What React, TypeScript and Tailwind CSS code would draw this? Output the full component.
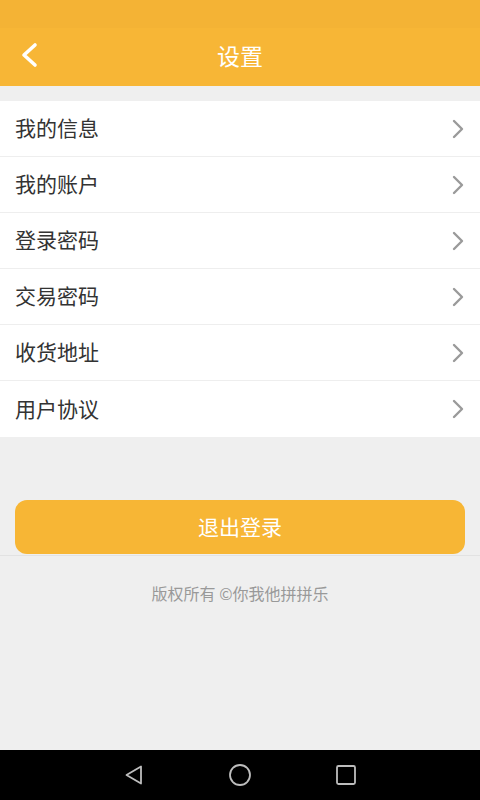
import React from "react";

const items = ["我的信息", "我的账户", "登录密码", "交易密码", "收货地址", "用户协议"];

const font = { fontFamily: '"Noto Sans CJK SC", "Noto Sans", sans-serif' };

export default function App() {
  return (
    <div className="w-[480px] h-[800px] bg-[#efefef] flex flex-col overflow-hidden" style={font}>
      <div className="h-[28px] bg-[#f4b335] shrink-0" />
      <div className="h-[58px] bg-[#f7b636] shrink-0 relative flex items-center justify-center">
        <div className="absolute left-[19px] top-[14px]">
          <svg width="20" height="26" viewBox="0 0 20 26">
            <path d="M16 3 L5 13 L16 23" fill="none" stroke="#ffffff" strokeWidth="3.6" strokeLinecap="round" strokeLinejoin="round" />
          </svg>
        </div>
        <span className="text-white text-[23px] leading-none -mt-[4px]">设置</span>
      </div>
      <div className="h-[15px] shrink-0" />
      <div className="bg-white flex flex-col">
        {items.map((t, i) => (
          <div
            key={t}
            className={`h-[56px] flex items-center justify-between pl-[15px] pr-[15px] ${i < items.length - 1 ? "border-b border-[#eeeeee]" : ""}`}
          >
            <span className="text-[21px] text-[#333333] leading-none -mt-[2px]">{t}</span>
            <svg width="14" height="20" viewBox="0 0 14 20">
              <path d="M3 2 L11 10 L3 18" fill="none" stroke="#9a9a9a" strokeWidth="2.4" strokeLinecap="round" strokeLinejoin="round" />
            </svg>
          </div>
        ))}
      </div>
      <div className="h-[63px] shrink-0" />
      <div className="px-[15px]">
        <div className="h-[54px] bg-[#f7b635] rounded-[12px] flex items-center justify-center">
          <span className="text-white text-[21px] leading-none -mt-[1px]">退出登录</span>
        </div>
      </div>
      <div className="h-px bg-[#e2e2e2] mt-px" />
      <div className="pt-[29px] flex justify-center">
        <span className="text-[16px] text-[#999999] leading-none">版权所有 ©你我他拼拼乐</span>
      </div>
      <div className="flex-1" />
      <div className="h-[50px] bg-black shrink-0 flex items-center justify-center gap-[83px]">
        <svg width="22" height="22" viewBox="0 0 22 22">
          <path d="M18 2.5 L18 19.5 L3.5 11 Z" fill="none" stroke="#bdbdbd" strokeWidth="1.8" strokeLinejoin="round" />
        </svg>
        <svg width="24" height="24" viewBox="0 0 24 24">
          <circle cx="12" cy="12" r="10" fill="none" stroke="#bdbdbd" strokeWidth="1.8" />
        </svg>
        <svg width="22" height="22" viewBox="0 0 22 22">
          <rect x="2" y="2" width="18" height="18" rx="1.5" fill="none" stroke="#bdbdbd" strokeWidth="1.8" />
        </svg>
      </div>
    </div>
  );
}
